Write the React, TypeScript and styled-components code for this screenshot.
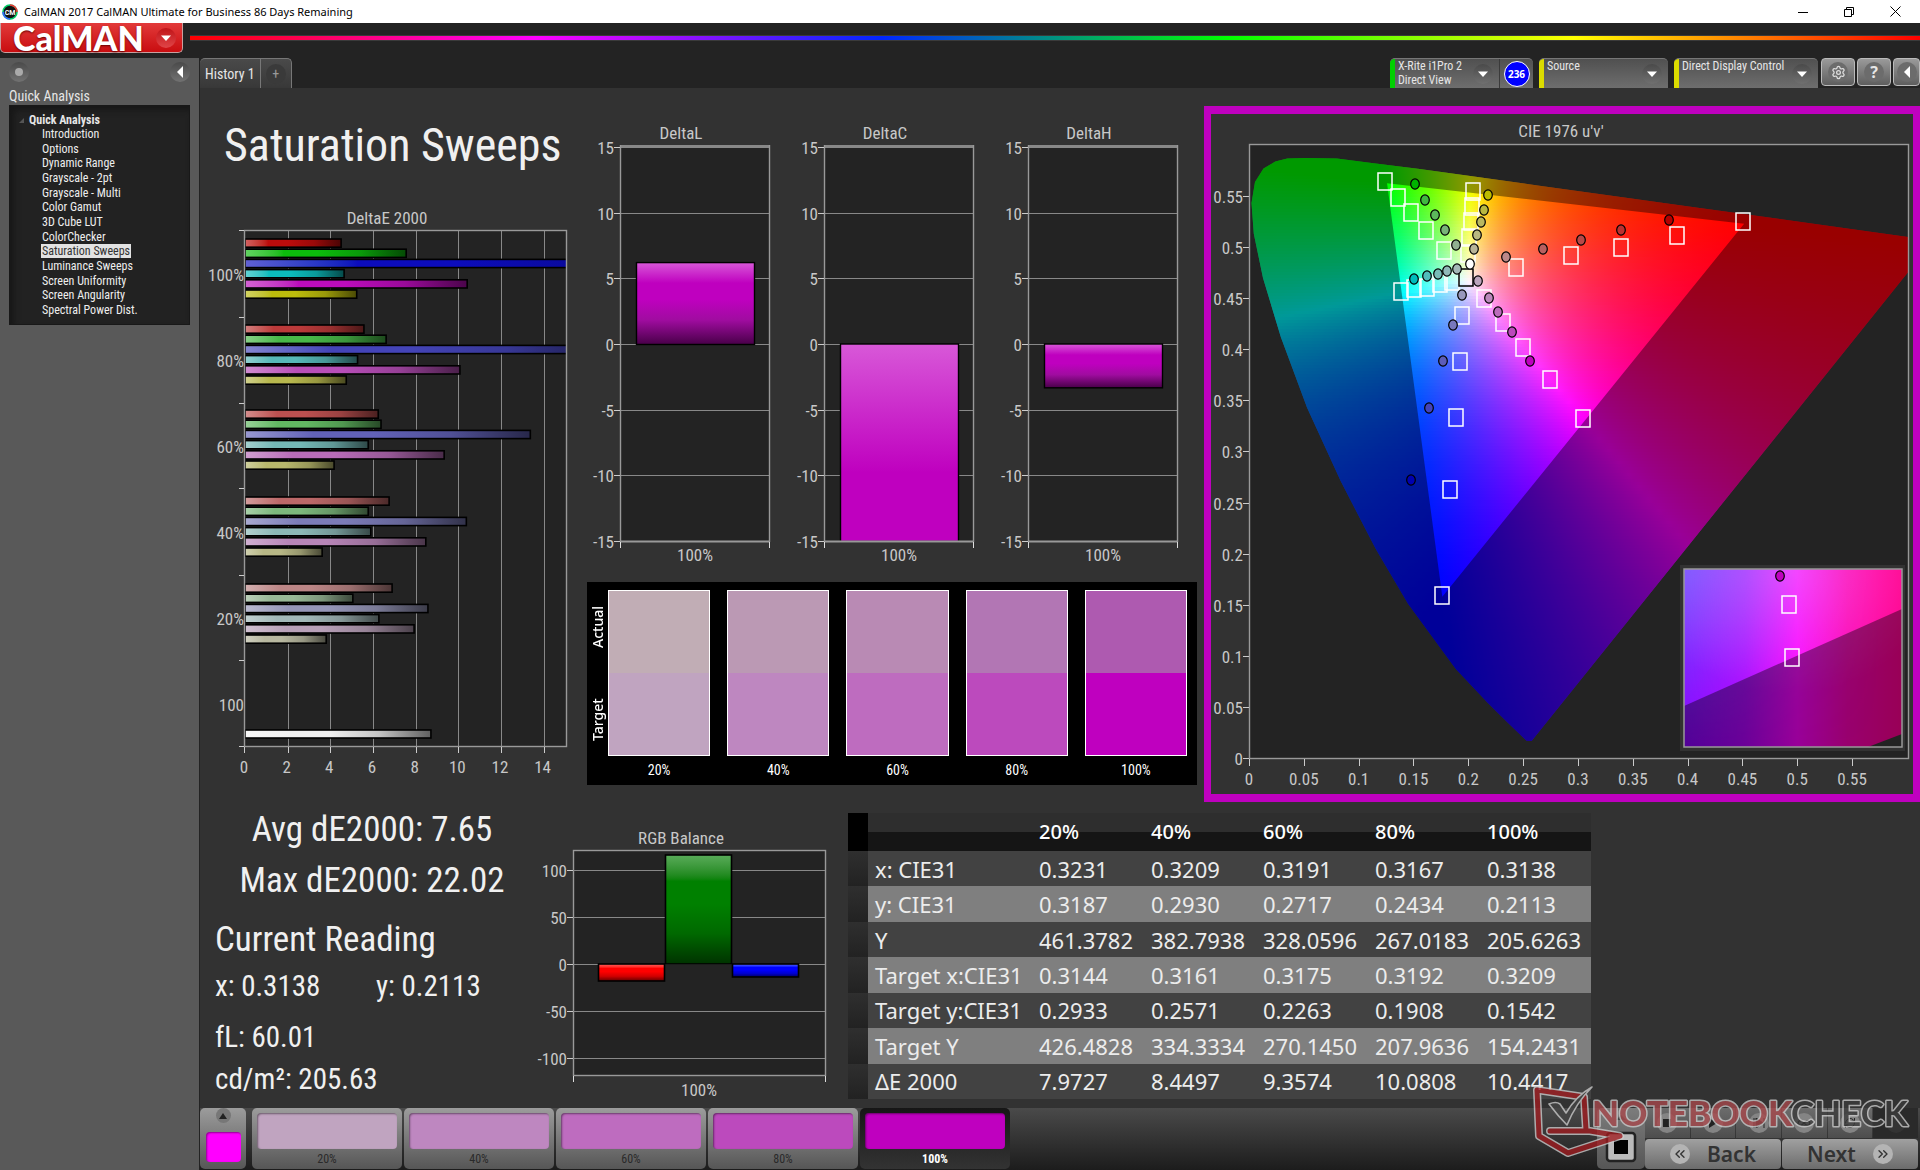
import React from "react";
import styled, { createGlobalStyle } from "styled-components";
import { ChevronsLeft, ChevronsRight, Infinity as Loop, RefreshCw, Settings } from "lucide-react";

const CONDENSED = '"Roboto Condensed", "Liberation Sans Narrow", Roboto, sans-serif';
const WIDE = '"Noto Sans", "Open Sans", sans-serif';

const GlobalStyle = createGlobalStyle`
  *, *::before { box-sizing: border-box; }
  body { margin: 0; background: #232323; font-family: ${CONDENSED}; color: #e6e6e6; }
  button { font-family: inherit; color: inherit; border: 0; padding: 0; margin: 0; cursor: pointer; }
`;

/* ---------- window frame ---------- */

const Shell = styled.div`
  position: relative;
  display: flex;
  flex-direction: column;
  min-height: 100vh;
  overflow: hidden;
`;

const TitleBar = styled.header`
  display: flex;
  align-items: center;
  height: 23px;
  padding-left: 2px;
  background: #fff;
  color: #000;
  font: 11px/20px ${WIDE};
`;

const TitleText = styled.span`
  flex: 1;
  padding-left: 6px;
`;

const WindowButtons = styled.div`
  display: flex;
  padding-right: 2px;
`;

const WindowButton = styled.button`
  width: 46px;
  height: 20px;
  background: none;
  display: grid;
  place-items: center;
`;

const Banner = styled.div`
  display: flex;
  height: 35px;
  background: #232323;
`;

const Logo = styled.button`
  display: flex;
  align-items: center;
  justify-content: space-between;
  width: 183px;
  height: 30px;
  padding: 0 6px 0 12px;
  border: 1px solid #c9a0a0;
  border-top: 0;
  border-radius: 0 0 5px 5px;
  background: linear-gradient(#e23a3a, #c90d10);
  color: #fff;
  font: 900 34px/28px Lato, sans-serif;
  text-shadow: 0 1px 2px #600;
`;

const Rainbow = styled.div`
  flex: 1;
  height: 6px;
  margin: 12px 0 0 7px;
  border: solid #3a3a3a;
  border-width: 1px 0;
  background: linear-gradient(90deg, #f00, #f0f 20%, #0026ff 40%, #0f0 60%, #ff0 80%, #f00);
`;

const Body = styled.div`
  display: flex;
  flex: 1;
`;

/* ---------- sidebar ---------- */

const Sidebar = styled.nav`
  width: 200px;
  flex: none;
  padding: 0 9px;
  background: #595959;
  border-right: 1px solid #232323;
`;

const SidebarTools = styled.div`
  display: flex;
  justify-content: space-between;
  padding-top: 4px;
`;

const Knob = styled.button`
  display: grid;
  place-items: center;
  flex: none;
  width: 20px;
  height: 20px;
  border-radius: 50%;
  background: linear-gradient(#4a4a4a, #727272);
`;

const KnobFace = styled.span<{ $size?: number; $tone?: string }>`
  display: grid;
  place-items: center;
  flex: none;
  width: ${p => p.$size || 20}px;
  height: ${p => p.$size || 20}px;
  border-radius: 50%;
  background: ${p => p.$tone || "linear-gradient(#4a4a4a, #707070)"};
`;

const SidebarTitle = styled.h2`
  margin: 5px 0 0;
  font-size: 14px;
  line-height: 18px;
  font-weight: 400;
`;

const Tree = styled.div`
  height: 220px;
  padding: 7px 0 0 4px;
  background: #222;
  border: 1px solid #181818;
  box-shadow: inset 4px 4px 6px #171717;
`;

const TreeRoot = styled.div`
  display: flex;
  align-items: center;
  gap: 4px;
  padding-left: 4px;
  font: 700 12px/14px ${CONDENSED};
`;

const TreeList = styled.ul`
  display: flex;
  flex-direction: column;
  justify-content: space-between;
  height: 190px;
  margin: 0;
  padding: 0 0 0 27px;
  list-style: none;
`;

const TreeItem = styled.li`
  display: flex;
`;

const TreeLink = styled.a<{ $on?: boolean }>`
  padding: 0 1px;
  font-size: 12px;
  line-height: 14px;
  text-decoration: none;
  color: ${p => (p.$on ? "#333" : "#eee")};
  background: ${p => (p.$on ? "#e2e2e2" : "none")};
`;

/* ---------- main column ---------- */

const Main = styled.main`
  flex: 1;
  display: flex;
  flex-direction: column;
  min-width: 0;
`;

const TabRow = styled.div`
  display: flex;
  justify-content: space-between;
  height: 30px;
  background: #232323;
`;

const Tabs = styled.div`
  display: flex;
`;

const Tab = styled.button<{ $end?: boolean }>`
  display: grid;
  place-items: center;
  padding: 0 5px;
  border: solid #777;
  border-width: 1px 1px 0 0;
  border-radius: ${p => (p.$end ? "0 5px 0 0" : "5px 0 0 0")};
  background: linear-gradient(#4a4a4a, #383838);
  color: ${p => (p.$end ? "#999" : "#e6e6e6")};
  font-size: 14px;
`;

const Devices = styled.div`
  display: flex;
  gap: 6px;
`;

const Device = styled.div<{ $w: number }>`
  display: flex;
  width: ${p => p.$w}px;
  height: 30px;
  border-top: 1px solid #777;
  border-radius: 5px 5px 0 0;
  background: linear-gradient(#505050, #6e6e6e);
  overflow: hidden;
`;

const DevicePick = styled.button<{ $mark: string }>`
  display: flex;
  flex: 1;
  justify-content: space-between;
  padding: 0 6px 0 3px;
  border-left: 5px solid ${p => p.$mark};
  background: none;
  text-align: left;
  font-size: 12px;
  line-height: 14px;
`;

const DeviceKnob = styled(KnobFace)`
  align-self: center;
`;

const Countdown = styled.div`
  display: grid;
  place-items: center;
  width: 34px;
  border-left: 1px solid #3a3a3a;
`;

const CountdownDot = styled.span`
  width: 26px;
  height: 26px;
  border: 1px solid #fff;
  border-radius: 50%;
  background: #00f;
  color: #fff;
  font: 700 10px/24px ${WIDE};
  text-align: center;
`;

const ToolGroup = styled.div`
  display: flex;
  gap: 2px;
  margin-left: -3px;
`;

const ToolButton = styled.button<{ $w?: number }>`
  display: grid;
  place-items: center;
  width: ${p => p.$w || 34}px;
  height: 28px;
  border: 1px solid #bbb;
  border-radius: 4px;
  background: linear-gradient(#9a9a9a, #5e5e5e);
  font: 700 16px/20px ${WIDE};
`;

const Stage = styled.div`
  flex: 1;
  background: #323232;
  padding-top: 18px;
`;

const TopRow = styled.div`
  display: grid;
  grid-template-columns: 380px 624px 1fr;
`;

const BottomRow = styled.div`
  display: grid;
  grid-template-columns: 320px 328px 743px;
  align-items: start;
`;

const Drawing = styled.svg`
  display: block;
  width: 100%;
  height: auto;
  font-family: ${CONDENSED};
  font-size: 17px;
  fill: #c8c8c8;
`;

const PageTitle = styled.h1`
  margin: 0;
  height: 84px;
  padding-left: 24px;
  font-size: 46px;
  line-height: 78px;
  font-weight: 400;
  color: #f0f0f0;
  white-space: nowrap;
`;

const DeltaRow = styled.div`
  display: grid;
  grid-template-columns: repeat(3, 204px);
  height: 476px;
`;

/* ---------- colour comparison ---------- */

const Compare = styled.section`
  display: grid;
  grid-template-columns: 21px 1fr;
  height: 203px;
  margin: 0 7px;
  padding: 8px 10px 0 0;
  background: #000;
`;

const SideLabels = styled.div`
  display: grid;
  grid-template-rows: 75px 109px;
  justify-items: center;
`;

const SideLabel = styled.span`
  writing-mode: vertical-rl;
  transform: rotate(180deg);
  text-align: center;
  color: #fff;
  font: 500 14px/20px ${WIDE};
`;

const CompareList = styled.div`
  display: grid;
  grid-template-columns: repeat(5, 1fr);
  gap: 17px;
`;

const Patch = styled.figure<{ $actual: string; $target: string }>`
  margin: 0;
  &::before {
    content: "";
    display: block;
    height: 166px;
    border: 1px solid #fff;
    background: linear-gradient(${p => p.$actual} 50%, ${p => p.$target} 50%);
  }
`;

const PatchName = styled.figcaption`
  text-align: center;
  font-size: 14px;
  line-height: 29px;
  color: #fff;
`;

const CiePanel = styled.section`
  border: solid #bf00bf;
  border-width: 8px 7px;
`;

/* ---------- readings and table ---------- */

const Readings = styled.section`
  padding: 2px 0 0 15px;
  color: #f0f0f0;
  white-space: nowrap;
`;

const BigLine = styled.div<{ $center?: boolean; $gap?: number }>`
  width: 314px;
  margin-top: ${p => p.$gap || 0}px;
  font-size: 35px;
  line-height: 51px;
  text-align: ${p => (p.$center ? "center" : "left")};
`;

const ReadLine = styled.div<{ $gap?: number }>`
  display: grid;
  grid-template-columns: 161px 1fr;
  margin-top: ${p => p.$gap || 0}px;
  font-size: 29px;
  line-height: 42px;
`;

const DataTable = styled.table`
  width: 743px;
  height: 286px;
  margin-top: 11px;
  border-collapse: collapse;
  table-layout: fixed;
  font: 22px/34px ${WIDE};
  color: #ececec;
  td, th { padding: 0 0 0 7px; text-align: left; font-weight: 400; white-space: nowrap; }
  thead th { height: 38px; font-size: 20px; font-weight: 500; color: #fff; }
  thead tr { background: linear-gradient(#2e2e2e 50%, #151515 50%); }
  tbody tr:nth-child(odd) { background: #424242; }
  tbody tr:nth-child(even) { background: #7f7f7f; }
  tbody td:first-child { background: linear-gradient(#2f2f2f, #222); }
  thead td { background: #000; }
`;

/* ---------- bottom bar ---------- */

const Dock = styled.footer`
  display: flex;
  gap: 2px;
  height: 62px;
  padding-right: 2px;
  background: linear-gradient(#4a4a4a, #1c1c1c);
`;

const DockTile = styled.button<{ $on?: boolean }>`
  width: 150px;
  height: 61px;
  padding: 5px;
  border-radius: 5px;
  background: ${p => (p.$on ? "linear-gradient(#161616, #333)" : "linear-gradient(#9c9c9c, #565656)")};
  color: ${p => (p.$on ? "#fff" : "#2a2a2a")};
  font-size: 12px;
  font-weight: ${p => (p.$on ? 700 : 400)};
  line-height: 20px;
`;

const DockColor = styled.span<{ $c: string; $h?: number }>`
  display: block;
  height: ${p => p.$h || 36}px;
  border-radius: 4px;
  background: ${p => p.$c};
  box-shadow: inset 1px 1px 2px rgba(0, 0, 0, 0.45);
`;

const CurrentTile = styled.button`
  display: grid;
  grid-template-rows: 24px 31px;
  justify-items: center;
  width: 46px;
  height: 61px;
  margin-right: 4px;
  border-radius: 5px;
  background: linear-gradient(#9c9c9c, #565656);
`;

const CurrentColor = styled(DockColor)`
  width: 35px;
`;

const Transport = styled.div`
  display: grid;
  grid-template-columns: 48px 1fr;
  width: 321px;
  margin-left: auto;
`;

const StopTile = styled.button`
  display: grid;
  align-content: space-around;
  justify-items: center;
  height: 61px;
  border-radius: 5px;
  background: linear-gradient(#7c7c7c, #565656);
`;

const TransportButtons = styled.div`
  display: grid;
  grid-template-columns: repeat(6, 1fr);
  grid-template-rows: 30px 30px;
  gap: 1px;
`;

const SmallButton = styled.button<{ $off?: boolean }>`
  display: grid;
  place-items: center;
  background: ${p => (p.$off ? "#2a2a2a" : "linear-gradient(#6c6c6c, #4d4d4d)")};
  color: #222;
`;

const PageButton = styled.button`
  grid-column: span 3;
  display: flex;
  align-items: center;
  justify-content: center;
  gap: 17px;
  border-radius: 4px;
  background: linear-gradient(#a0a0a0, #6c6c6c);
  color: #333;
  font: 600 21px/28px ${WIDE};
`;

const Watermark = styled.svg`
  position: absolute;
  right: 6px;
  bottom: 8px;
  width: 390px;
  height: 80px;
  opacity: 0.78;
  pointer-events: none;
`;

/* ---------- data ---------- */

const PAGES = ["Introduction", "Options", "Dynamic Range", "Grayscale - 2pt", "Grayscale - Multi", "Color Gamut", "3D Cube LUT", "ColorChecker", "Saturation Sweeps", "Luminance Sweeps", "Screen Uniformity", "Screen Angularity", "Spectral Power Dist."];

const LEVELS = [
  { name: "20%", actual: "#c1adb5", target: "#c0a4c0" },
  { name: "40%", actual: "#bb99b4", target: "#be87c0" },
  { name: "60%", actual: "#b98ab4", target: "#be6cbf" },
  { name: "80%", actual: "#b276b4", target: "#bc4abd" },
  { name: "100%", actual: "#ae5ab0", target: "#bf00bf" },
];

const SWEEPS = [
  { name: "100%", top: 238, values: [4.53, 7.58, 22, 4.67, 10.44, 5.26], colors: ["#bc0c0c", "#0cbc0c", "#0c0cbc", "#0cbcbc", "#bc0cbc", "#bcbc0c"] },
  { name: "80%", top: 324, values: [5.6, 6.64, 17, 5.3, 10.1, 4.77], colors: ["#bc3a3a", "#48b848", "#4444b8", "#56b8b8", "#b84eb8", "#b8b84e"] },
  { name: "60%", top: 409, values: [6.27, 6.4, 13.4, 5.8, 9.36, 4.2], colors: ["#bc5050", "#62b862", "#6262b8", "#74b8b6", "#b86cb8", "#b8b86c"] },
  { name: "40%", top: 496, values: [6.78, 5.8, 10.4, 5.92, 8.5, 3.64], colors: ["#bc6868", "#7cb87c", "#7c7cb8", "#8cb8b6", "#b886b8", "#b8b886"] },
  { name: "20%", top: 583, values: [6.92, 5.08, 8.6, 6.3, 7.95, 3.83], colors: ["#bc8686", "#98b896", "#9696b8", "#a2b8b8", "#b8a0b8", "#b8b8a0"] },
];

const ROWS: [string, string[]][] = [
  ["x: CIE31", ["0.3231", "0.3209", "0.3191", "0.3167", "0.3138"]],
  ["y: CIE31", ["0.3187", "0.2930", "0.2717", "0.2434", "0.2113"]],
  ["Y", ["461.3782", "382.7938", "328.0596", "267.0183", "205.6263"]],
  ["Target x:CIE31", ["0.3144", "0.3161", "0.3175", "0.3192", "0.3209"]],
  ["Target y:CIE31", ["0.2933", "0.2571", "0.2263", "0.1908", "0.1542"]],
  ["Target Y", ["426.4828", "334.3334", "270.1450", "207.9636", "154.2431"]],
  ["ΔE 2000", ["7.9727", "8.4497", "9.3574", "10.0808", "10.4417"]],
];

/* ---------- charts ---------- */

const Down = () => (
  <svg width="10" height="10" viewBox="0 0 10 10"><path d="M0 2.5h10L5 8z" fill="#fff" /></svg>
);
const Left = () => (
  <svg width="8" height="12" viewBox="0 0 8 12"><path d="M7 0v12L1 6z" fill="#fff" /></svg>
);

/* Light, pure and dark stops shared by every bar. */
function BarFill({ id, color, vertical }: { id: string; color: string; vertical?: boolean }) {
  const mix = (to: string, n: number) => `color-mix(in srgb, ${to} ${n}%, ${color})`;
  return (
    <linearGradient id={id} x2={vertical ? 0 : 1} y2={vertical ? 1 : 0}>
      <stop stopColor={mix("white", 35)} />
      <stop offset=".24" stopColor={color} />
      <stop offset=".45" stopColor={color} />
      <stop offset=".72" stopColor={mix("black", 18)} />
      <stop offset="1" stopColor={mix("black", 60)} />
    </linearGradient>
  );
}

function DeltaEChart() {
  const x = (v: number) => 245 + v * 21.33;
  const edges = [230, 317, 403, 488, 575, 660, 746];
  const steps = [0, 2, 4, 6, 8, 10, 12, 14];
  return (
    <Drawing viewBox="200 190 380 612" role="img" aria-label="DeltaE 2000">
      <text x="387" y="224" textAnchor="middle">DeltaE 2000</text>
      <clipPath id="dePlot"><rect x="244" y="230" width="322" height="517" /></clipPath>
      <rect x="244.5" y="230.500" width="322" height="516" fill="#232323" />
      {steps.slice(1).map(v => <path key={v} d={`M${Math.round(x(v)) + 0.5} 230V746`} stroke="#888" />)}
      <g clipPath="url(#dePlot)">
        {SWEEPS.map((s, g) => s.values.map((v, i) => (
          <g key={`${g}-${i}`}>
            <BarFill id={`de${g}${i}`} color={s.colors[i]} />
            <rect x="245" y={s.top + i * 10.2 + 1} width={x(v) - 245.5} height="8.2" fill={`url(#de${g}${i})`} stroke="#000" strokeWidth="1.6" />
          </g>
        )))}
        <BarFill id="deWhite" color="#f0f0f0" />
        <rect x="245" y="730" width={x(8.74) - 245.5} height="8" fill="url(#deWhite)" stroke="#000" strokeWidth="1.6" />
      </g>
      <rect x="244.5" y="230.500" width="322" height="516" fill="none" stroke="#999" strokeWidth="1.4" />
      <g stroke="#ccc">
        {edges.map(y => <path key={y} d={`M239 ${y + 0.5}h5`} />)}
        {steps.map(v => <path key={v} d={`M${Math.round(x(v)) + 0.5 - (v ? 0 : 1)} 747v6`} />)}
      </g>
      {["100%", "80%", "60%", "40%", "20%", "100"].map((t, i) => <text key={i} x="244" y={281 + i * 86} textAnchor="end">{t}</text>)}
      {steps.map(v => <text key={v} x={x(v) - 1} y="773" textAnchor="middle">{v}</text>)}
    </Drawing>
  );
}

function DeltaChart({ name, value }: { name: string; value: number }) {
  const y = (v: number) => 238 - v * 13.13;
  const cut = value < -15;
  const end = Math.max(value, -15);
  const top = Math.min(y(0), y(end));
  return (
    <Drawing viewBox="0 0 204 476" role="img" aria-label={name}>
      <text x="101" y="33" textAnchor="middle">{name}</text>
      <rect x="40.5" y="39" width="149" height="397" fill="#232323" />
      <path d="M41 40.5h149" stroke="#888" strokeWidth="3" />
      {[10, 5, 0, -5, -10].map(v => <path key={v} d={`M41 ${Math.round(y(v)) + 0.5}h149`} stroke="#888" />)}
      <linearGradient id={name} x2="0" y2="1">
        <stop stopColor="#d858d8" />
        <stop offset={cut ? 0.65 : 0.25} stopColor="#bf00bf" />
        <stop offset={cut ? 1 : 0.45} stopColor="#bf00bf" />
        {!cut && <stop offset=".7" stopColor="#a00ca0" />}
        {!cut && <stop offset="1" stopColor="#480048" />}
      </linearGradient>
      <rect x="56.5" y={top} width="118" height={Math.abs(y(end) - y(0)) + 0.5} fill={`url(#${name})`} stroke="#000" strokeWidth="1.4" />
      <path d="M41 435.5h149" stroke="#999" strokeWidth="2" />
      <path d="M40.5 39V436M189.5 39V436" stroke="#999" strokeWidth="1.4" />
      <path d="M40.5 436v6M189.5 436v6" stroke="#ddd" />
      {[15, 10, 5, 0, -5, -10, -15].map(v => (
        <g key={v}>
          <path d={`M34 ${Math.round(y(v)) + 0.5}h6`} stroke="#ccc" />
          <text x="34" y={y(v) + 7} textAnchor="end">{v}</text>
        </g>
      ))}
      <text x="115" y="455" textAnchor="middle">100%</text>
    </Drawing>
  );
}

function BalanceChart() {
  const y = (v: number) => 964 - v * 0.94;
  const bars: [string, string, number, number, number][] = [["balR", "#ff0000", 598, 964, 981], ["balG", "#008000", 665, 855, 964], ["balB", "#0000ff", 732, 964, 977]];
  return (
    <Drawing viewBox="520 802 328 306" role="img" aria-label="RGB Balance">
      <text x="681" y="844" textAnchor="middle">RGB Balance</text>
      <rect x="573.5" y="850.500" width="252" height="225" fill="#232323" stroke="#999" strokeWidth="1.4" />
      {[100, 50, 0, -50, -100].map(v => (
        <g key={v}>
          <path d={`M567 ${Math.round(y(v)) + 0.5}h258`} stroke="#888" />
          <path d={`M567 ${Math.round(y(v)) + 0.5}h6`} stroke="#ccc" />
          <text x="567" y={y(v) + 7} textAnchor="end">{v}</text>
        </g>
      ))}
      {bars.map(([id, color, x, top, bottom]) => (
        <g key={id}>
          <BarFill id={id} color={color} vertical />
          <rect x={x + 0.5} y={top} width="66" height={bottom - top} fill={`url(#${id})`} stroke="#000" strokeWidth="1.6" />
        </g>
      ))}
      <path d="M573.5 1076v6M825.5 1076v6" stroke="#ddd" />
      <text x="699" y="1096" textAnchor="middle">100%</text>
    </Drawing>
  );
}

/* u'v' chromaticity to a fully bright display colour. */
function chroma(u: number, v: number) {
  const d = 6 * u - 16 * v + 12;
  const x = (9 * u) / d, y = Math.max((4 * v) / d, 0.0001);
  const X = x / y, Z = (1 - x - y) / y;
  const lin = [3.2406 * X - 1.5372 - 0.4986 * Z, -0.9689 * X + 1.8758 + 0.0415 * Z, 0.0557 * X - 0.204 + 1.057 * Z].map(c => Math.max(c, 0));
  const top = Math.max(...lin, 0.0001);
  return `rgb(${lin.map(c => Math.round((255 * c) / top)).join()})`;
}

const LOCUS = [[.2568, .0166], [.2522, .0169], [.2347, .035], [.2161, .0549], [.1877, .0871], [.1441, .151], [.1147, .2044], [.0828, .2708], [.0521, .3427], [.0282, .4117], [.0119, .4698], [.0035, .5131], [.0014, .5432], [.0046, .5638], [.0123, .577], [.0231, .5837], [.034, .5868], [.0501, .5872], [.0792, .5868], [.1127, .5821], [.1531, .5766], [.2026, .5694], [.2623, .5604], [.3315, .5501], [.4035, .5393], [.5203, .5219], [.6234, .5065]];

type Mark = [number, number, string?];
const TARGETS: Mark[] = [
  [1385, 181], [1398, 197], [1411, 212], [1426, 230], [1444, 250],
  [1473, 191], [1472, 206], [1471, 221], [1469, 237], [1468, 253],
  [1743, 221], [1677, 235], [1621, 247], [1571, 255], [1516, 267],
  [1401, 291], [1414, 288], [1427, 287], [1440, 283], [1452, 281],
  [1484, 298], [1503, 322], [1523, 347], [1550, 379], [1583, 418],
  [1462, 315], [1460, 361], [1456, 417], [1450, 489], [1442, 595],
  [1466, 277, "#000"],
];
const MEASURED: Mark[] = [
  [1415, 184, "#00b400"], [1425, 200, "#40b840"], [1435, 215, "#5cb85c"], [1445, 230, "#78b478"], [1456, 245, "#90b090"],
  [1488, 195, "#bcbc00"], [1484, 210, "#b8b840"], [1481, 222, "#b8b860"], [1477, 235, "#b8b880"], [1474, 249, "#b8b498"],
  [1669, 220, "#b40000"], [1621, 230, "#bc3030"], [1581, 240, "#b84848"], [1543, 249, "#b86060"], [1506, 257, "#bc8888"],
  [1414, 279, "#00bcbc"], [1427, 276, "#50bcbc"], [1438, 274, "#78bcb8"], [1447, 271, "#90b8b8"], [1457, 269, "#a4b8b8"],
  [1478, 281, "#bca4bc"], [1489, 298, "#bc88bc"], [1498, 312, "#bc6cbc"], [1512, 332, "#bc48bc"], [1530, 361, "#bf00bf"],
  [1462, 295, "#9898bc"], [1453, 325, "#7878bc"], [1443, 361, "#5c5cb8"], [1429, 408, "#4444b8"], [1411, 480, "#0000b0"],
  [1470, 264, "#fff"],
];

const Square = ({ at: [x, y, c] }: { at: Mark }) => <rect x={x - 7} y={y - 8} width="14" height="17" fill="none" stroke={c || "#fff"} strokeWidth="1.5" />;
const Dot = ({ at: [x, y, c] }: { at: Mark }) => <ellipse cx={x} cy={y} rx="4.3" ry="5.2" fill={c} stroke="#000" strokeWidth="1.2" />;

function CieChart() {
  const px = (u: number) => 1250 + u * 1096.4;
  const py = (v: number) => 758 - v * 1021.8;
  const ticks = [0, 0.05, 0.1, 0.15, 0.2, 0.25, 0.3, 0.35, 0.4, 0.45, 0.5, 0.55];
  const locus = "M" + LOCUS.map(([u, v]) => `${px(u).toFixed(1)} ${py(v).toFixed(1)}`).join("L") + "Z";
  const gamut = `M${px(0.125)} ${py(0.5625)}L${px(0.4507)} ${py(0.5229)}L${px(0.1754)} ${py(0.1579)}Z`;
  const strips = Array.from({ length: 199 }, (_, i) => 155 + i * 3);
  const stops = Array.from({ length: 67 }, (_, i) => i / 66);
  return (
    <Drawing viewBox="1211 114 702 680" role="img" aria-label="CIE 1976 u'v'">
      <clipPath id="locus"><path d={locus} /></clipPath>
      <clipPath id="ciePlot"><rect x="1250" y="144" width="658" height="614" /></clipPath>
      <text x="1561" y="137" textAnchor="middle">CIE 1976 u'v'</text>
      <rect x="1249.5" y="144" width="659" height="614" fill="#232323" />
      <g clipPath="url(#ciePlot)">
        <g clipPath="url(#locus)">
          {strips.map(y => (
            <g key={y}>
              <linearGradient id={`strip${y}`}>
                {stops.map(t => <stop key={t} offset={t} stopColor={chroma(t * 0.6, (758 - y - 1.5) / 1021.8)} />)}
              </linearGradient>
              <rect x="1250" y={y} width="658" height="3" fill={`url(#strip${y})`} />
            </g>
          ))}
          <path d={`M1211 114H1913V794H1211Z${gamut}`} fillRule="evenodd" fill="#000" fillOpacity=".4" />
        </g>
      </g>
      {TARGETS.map((m, i) => <Square key={i} at={m} />)}
      {MEASURED.map((m, i) => <Dot key={i} at={m} />)}

      <linearGradient id="zoomHue">
        <stop stopColor="#8a00ff" /><stop offset=".28" stopColor="#b400ff" /><stop offset=".52" stopColor="#ff00ff" /><stop offset=".75" stopColor="#ff00b8" /><stop offset="1" stopColor="#ff0090" />
      </linearGradient>
      <linearGradient id="zoomTint" x2="0" y2="1">
        <stop stopColor="#66a0ff" stopOpacity=".5" /><stop offset="1" stopColor="#66a0ff" stopOpacity="0" />
      </linearGradient>
      <linearGradient id="zoomFade"><stop stopColor="#fff" /><stop offset=".5" stopColor="#333" /><stop offset=".9" stopColor="#000" /></linearGradient>
      <mask id="zoomMask"><rect x="1684" y="569" width="218" height="178" fill="url(#zoomFade)" /></mask>
      <radialGradient id="zoomGlow" cx=".48" cy="0" r=".7" fx=".48" fy="0">
        <stop stopColor="#fff" stopOpacity=".24" /><stop offset="1" stopColor="#fff" stopOpacity="0" />
      </radialGradient>
      <rect x="1680" y="565" width="225" height="186" fill="#323232" />
      <rect x="1684" y="569" width="218" height="178" fill="url(#zoomHue)" />
      <rect x="1684" y="569" width="218" height="178" fill="url(#zoomTint)" mask="url(#zoomMask)" />
      <rect x="1684" y="569" width="218" height="178" fill="url(#zoomGlow)" />
      <path d="M1684 706L1902 609V747H1684Z" fill="#000" fillOpacity=".4" />
      <path d="M1868 747L1902 734V747Z" fill="#232323" />
      <rect x="1684" y="569" width="218" height="178" fill="none" stroke="#999" strokeWidth="1.5" />
      <Dot at={[1780, 576, "#bf00bf"]} />
      <Square at={[1789, 604]} />
      <Square at={[1792, 657]} />

      <rect x="1249.5" y="144.500" width="659" height="614" fill="none" stroke="#999" strokeWidth="1.4" />
      {ticks.map(t => (
        <g key={t}>
          <path d={`M1243 ${Math.round(py(t)) + 0.5}h6M${Math.round(px(t)) - 0.5} 759v7`} stroke="#ccc" />
          <text x="1243" y={py(t) + 7} textAnchor="end">{t}</text>
          <text x={px(t) - 1} y="785" textAnchor="middle">{t}</text>
        </g>
      ))}
    </Drawing>
  );
}

export default function App() {
  return (
    <Shell>
      <GlobalStyle />
      <TitleBar>
        <svg width="16" height="16" viewBox="0 0 16 16">
          <circle cx="8" cy="8" r="7" fill="#111" stroke="#0c6" strokeWidth="1.6" />
          <path d="M8 1a7 7 0 0 1 7 7" fill="none" stroke="#e33" strokeWidth="1.6" />
          <path d="M1 8a7 7 0 0 0 7 7" fill="none" stroke="#36f" strokeWidth="1.6" />
          <text x="8" y="10.6" textAnchor="middle" fontSize="7" fontWeight="700" fill="#fff" fontFamily="Roboto, sans-serif">CM</text>
        </svg>
        <TitleText>CalMAN 2017 CalMAN Ultimate for Business 86 Days Remaining</TitleText>
        <WindowButtons>
          <WindowButton aria-label="Minimize"><svg width="10" height="10"><path d="M0 5.5h10" stroke="#000" /></svg></WindowButton>
          <WindowButton aria-label="Restore"><svg width="10" height="10" fill="none" stroke="#000"><path d="M.5 2.5h7v7h-7zM2.5 2.5v-2h7v7h-2" /></svg></WindowButton>
          <WindowButton aria-label="Close"><svg width="11" height="11"><path d="M.5.5l10 10M10.5.5l-10 10" stroke="#000" /></svg></WindowButton>
        </WindowButtons>
      </TitleBar>

      <Banner>
        <Logo>CalMAN<KnobFace $tone="linear-gradient(#c01418, #e04548)"><Down /></KnobFace></Logo>
        <Rainbow />
      </Banner>

      <Body>
        <Sidebar>
          <SidebarTools>
            <Knob aria-label="Pin"><svg width="8" height="8"><circle cx="4" cy="4" r="4" fill="#aaa" /></svg></Knob>
            <Knob aria-label="Collapse"><Left /></Knob>
          </SidebarTools>
          <SidebarTitle>Quick Analysis</SidebarTitle>
          <Tree>
            <TreeRoot><svg width="7" height="7"><path d="M6 1v5H1z" fill="#555" /></svg>Quick Analysis</TreeRoot>
            <TreeList>
              {PAGES.map(p => <TreeItem key={p}><TreeLink href="#" $on={p === "Saturation Sweeps"}>{p}</TreeLink></TreeItem>)}
            </TreeList>
          </Tree>
        </Sidebar>

        <Main>
          <TabRow>
            <Tabs>
              <Tab>History 1</Tab>
              <Tab $end aria-label="Add tab"><KnobFace $tone="#3a3a3a">+</KnobFace></Tab>
            </Tabs>
            <Devices>
              <Device $w={143}>
                <DevicePick $mark="#00d000">X-Rite i1Pro 2<br />Direct View<DeviceKnob><Down /></DeviceKnob></DevicePick>
                <Countdown><CountdownDot>236</CountdownDot></Countdown>
              </Device>
              <Device $w={129}><DevicePick $mark="#dcdc00">Source<DeviceKnob><Down /></DeviceKnob></DevicePick></Device>
              <Device $w={144}><DevicePick $mark="#dcdc00">Direct Display Control<DeviceKnob><Down /></DeviceKnob></DevicePick></Device>
              <ToolGroup>
                <ToolButton aria-label="Settings"><KnobFace $tone="#6c6c6c"><Settings size={15} color="#ddd" /></KnobFace></ToolButton>
                <ToolButton aria-label="Help"><KnobFace $tone="#6c6c6c">?</KnobFace></ToolButton>
                <ToolButton aria-label="Hide" $w={27}><KnobFace $tone="#6c6c6c"><Left /></KnobFace></ToolButton>
              </ToolGroup>
            </Devices>
          </TabRow>

          <Stage>
            <TopRow>
              <div>
                <PageTitle>Saturation Sweeps</PageTitle>
                <DeltaEChart />
              </div>
              <div>
                <DeltaRow>
                  <DeltaChart name="DeltaL" value={6.2} />
                  <DeltaChart name="DeltaC" value={-20} />
                  <DeltaChart name="DeltaH" value={-3.3} />
                </DeltaRow>
                <Compare>
                  <SideLabels><SideLabel>Actual</SideLabel><SideLabel>Target</SideLabel></SideLabels>
                  <CompareList>
                    {LEVELS.map(l => <Patch key={l.name} $actual={l.actual} $target={l.target}><PatchName>{l.name}</PatchName></Patch>)}
                  </CompareList>
                </Compare>
              </div>
              <CiePanel><CieChart /></CiePanel>
            </TopRow>

            <BottomRow>
              <Readings>
                <BigLine $center>Avg dE2000: 7.65</BigLine>
                <BigLine $center>Max dE2000: 22.02</BigLine>
                <BigLine $gap={8}>Current Reading</BigLine>
                <ReadLine><span>x: 0.3138</span><span>y: 0.2113</span></ReadLine>
                <ReadLine $gap={9}>fL: 60.01</ReadLine>
                <ReadLine>cd/m²: 205.63</ReadLine>
              </Readings>
              <BalanceChart />
              <DataTable>
                <colgroup><col width="20" /><col width="164" /><col width="112" /><col width="112" /><col width="112" /><col width="112" /><col width="111" /></colgroup>
                <thead>
                  <tr><td /><th />{LEVELS.map(l => <th key={l.name} scope="col">{l.name}</th>)}</tr>
                </thead>
                <tbody>
                  {ROWS.map(([name, cells]) => (
                    <tr key={name}><td /><th scope="row">{name}</th>{cells.map(c => <td key={c}>{c}</td>)}</tr>
                  ))}
                </tbody>
              </DataTable>
            </BottomRow>
          </Stage>

          <Dock>
            <CurrentTile aria-label="Current color">
              <KnobFace $size={15} $tone="#777"><svg width="8" height="6"><path d="M0 6h8L4 0z" fill="#222" /></svg></KnobFace>
              <CurrentColor $c="#ff00ff" $h={30} />
            </CurrentTile>
            {LEVELS.map(l => <DockTile key={l.name} $on={l.name === "100%"}><DockColor $c={l.target} />{l.name}</DockTile>)}
            <Transport>
              <StopTile aria-label="Stop">
                <svg width="12" height="6"><path d="M1 6l5-5 5 5" fill="#444" /></svg>
                <svg width="32" height="32" viewBox="0 0 32 32"><rect x="2" y="2" width="28" height="28" rx="3" fill="#bbb" stroke="#222" strokeWidth="2.5" /><rect x="9" y="9" width="14" height="14" fill="#000" /></svg>
              </StopTile>
              <TransportButtons>
                <SmallButton aria-label="Stop reading"><KnobFace $tone="#848484"><svg width="8" height="8"><rect width="8" height="8" fill="#222" /></svg></KnobFace></SmallButton>
                <SmallButton aria-label="Play"><KnobFace $tone="#848484"><svg width="8" height="10"><path d="M0 0v10l8-5z" fill="#222" /></svg></KnobFace></SmallButton>
                <SmallButton aria-label="Step"><KnobFace $tone="#848484"><svg width="12" height="10"><path d="M1 0v10M3 0v10l7-5zM11 0v10" fill="#222" stroke="#222" /></svg></KnobFace></SmallButton>
                <SmallButton aria-label="Continuous"><KnobFace $tone="#848484"><Loop size={14} /></KnobFace></SmallButton>
                <SmallButton aria-label="Refresh"><KnobFace $tone="#848484"><RefreshCw size={12} /></KnobFace></SmallButton>
                <SmallButton aria-label="More" $off><KnobFace $tone="#333" /></SmallButton>
                <PageButton><KnobFace $tone="#b4b4b4"><ChevronsLeft size={16} /></KnobFace>Back</PageButton>
                <PageButton>Next<KnobFace $tone="#b4b4b4"><ChevronsRight size={16} /></KnobFace></PageButton>
              </TransportButtons>
            </Transport>
          </Dock>
        </Main>
      </Body>

      <Watermark viewBox="1524 1082 390 80">
        <g fill="none" strokeLinejoin="round" strokeLinecap="round">
          <path d="M1586 1130L1584 1097L1537 1090L1539 1136L1568 1153L1620 1136L1590 1131L1550 1131" stroke="#ccc" strokeWidth="8" />
          <path d="M1586 1130L1584 1097L1537 1090L1539 1136L1568 1153L1620 1136L1590 1131L1550 1131" stroke="#a01c20" strokeWidth="5" />
          <path d="M1549 1104q7-3 11 0l6 9q10-17 26-26q-16 16-25 38q-9-9-18-21z" fill="#444" stroke="#ccc" strokeWidth="1.6" />
        </g>
        <g fontFamily="Lato, sans-serif" fontSize="35" paintOrder="stroke" strokeLinejoin="round">
          <text x="1592" y="1126" fontWeight="900" fill="#a8484c" stroke="#ccc" strokeWidth="3">NOTEBOOK</text>
          <text x="1791" y="1126" fontWeight="700" fill="#3a3a3a" stroke="#ccc" strokeWidth="3">CHECK</text>
        </g>
      </Watermark>
    </Shell>
  );
}
